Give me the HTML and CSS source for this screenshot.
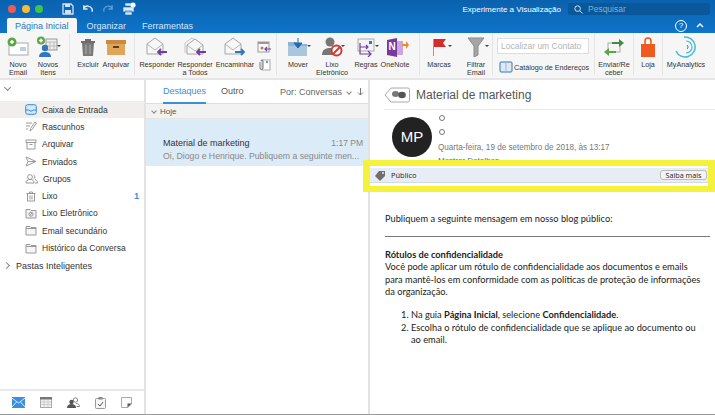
FILE: index.html
```html
<!DOCTYPE html>
<html>
<head>
  <title>Material de marketing</title>
  <link rel="stylesheet" href="styles.css">
</head>
<body>
  <header class="titlebar">
    <div class="topline">
      <div class="lights">
        <span class="light red"></span>
        <span class="light yellow"></span>
        <span class="light green"></span>
      </div>
      <div class="quick">
        <svg width="12" height="12" viewBox="0 0 12 12"><path d="M1 1h8l2 2v8H1z" fill="none" stroke="#cfe3f5" stroke-width="1.3"/><path d="M3 1h5v3H3zM3 7h6v4H3z" fill="#cfe3f5"/></svg>
        <svg width="12" height="12" viewBox="0 0 13 12"><path d="M2 5c2-3 7-3 9 1v3M2 2v4h4" fill="none" stroke="#dcebf8" stroke-width="1.6"/></svg>
        <svg width="12" height="12" viewBox="0 0 13 12"><path d="M11 5C9 2 4 2 2 6v3M11 2v4H7" fill="none" stroke="#5f9fd6" stroke-width="1.4"/></svg>
        <svg width="14" height="14" viewBox="0 0 14 14"><path d="M3 1h6v3H3zM1 5h11v5H1zM3 9h7v4H3z" fill="#dcebf8" stroke="#0b67b6" stroke-width=".6"/><circle cx="11" cy="3" r="2.6" fill="#fff"/></svg>
      </div>
      <div class="preview">Experimente a Visualização</div>
      <div class="search">
        <svg width="9" height="9" viewBox="0 0 9 9"><circle cx="3.6" cy="3.6" r="2.8" fill="none" stroke="#cfe3f5"/><path d="M5.8 5.8L8.5 8.5" stroke="#cfe3f5"/></svg>
        <span>Pesquisar</span>
      </div>
    </div>
    <div class="tabline">
      <div class="tab active">Página Inicial</div>
      <div class="tab">Organizar</div>
      <div class="tab">Ferramentas</div>
      <div class="tab-right">
        <span class="help">?</span>
        <svg width="8" height="5" viewBox="0 0 8 5"><path d="M1 4l3-3 3 3" fill="none" stroke="#fff" stroke-width="1.4"/></svg>
      </div>
    </div>
  </header>

  <div class="ribbon">
    <div class="group g-new">
      <div class="item w30">
        <div class="icon"><svg width="22" height="20" viewBox="0 0 22 20"><rect x="2" y="6" width="19" height="12" fill="#fff" stroke="#a9a9a9"/><path d="M13 10h6v4h-6z" fill="#b9cfe4"/><circle cx="5" cy="5" r="4.5" fill="#5aa646"/><path d="M3 5h4M5 3v4" stroke="#fff" stroke-width="1.4"/></svg></div>
        <div class="name">Novo<br>Email</div>
      </div>
      <div class="item w30">
        <div class="icon"><svg width="24" height="22" viewBox="0 0 24 22"><circle cx="5" cy="4.5" r="4" fill="#5aa646"/><path d="M3 4.5h4M5 2.5v4" stroke="#fff" stroke-width="1.3"/><rect x="10" y="3" width="11" height="11" fill="#eee" stroke="#999"/><path d="M10 6h11M14 6v8M18 6v8M10 10h11" stroke="#aaa" stroke-width=".7"/><circle cx="9" cy="12" r="3.2" fill="#2f77c0"/><path d="M3 21c0-4 3-5 6-5s6 1 6 5z" fill="#2f77c0"/></svg><i class="caret"></i></div>
        <div class="name">Novos<br>Itens</div>
      </div>
    </div>
    <div class="group g-delete">
      <div class="item w28">
        <div class="icon"><svg width="16" height="19" viewBox="0 0 16 19"><path d="M1 3h14v2H1zM5 1h6v2H5z" fill="#6d6d6d"/><path d="M2 5h12l-1 13H3z" fill="#7a7a7a"/><path d="M6 7v9M10 7v9" stroke="#a9a9a9" stroke-width="1.2"/></svg></div>
        <div class="name">Excluir</div>
      </div>
      <div class="item w28">
        <div class="icon"><svg width="20" height="17" viewBox="0 0 20 17"><path d="M0 1h20v4H0z" fill="#c9893f"/><path d="M1 5h18v11H1z" fill="#dfa658"/><path d="M7 7h6v2H7z" fill="#5a3d1c"/></svg></div>
        <div class="name">Arquivar</div>
      </div>
    </div>
    <div class="group g-reply">
      <div class="item w40">
        <div class="icon"><svg width="22" height="20" viewBox="0 0 22 20"><path d="M1 7l8-6 8 6v10H1z" fill="#f7f7f7" stroke="#a5a5a5"/><path d="M1 7l8 6 8-6" fill="none" stroke="#b5b5b5"/><path d="M21 15h-9M15 12l-3 3 3 3" fill="none" stroke="#6d3fa0" stroke-width="1.8"/></svg></div>
        <div class="name">Responder</div>
      </div>
      <div class="item w36">
        <div class="icon"><svg width="23" height="20" viewBox="0 0 23 20"><path d="M1 6l7-5 6 4" fill="none" stroke="#c5c5c5"/><path d="M1 6v10" stroke="#c5c5c5"/><path d="M3 8l8-6 8 6v9H3z" fill="#f7f7f7" stroke="#a5a5a5"/><path d="M3 8l8 6 8-6" fill="none" stroke="#b5b5b5"/><path d="M22 15h-9M16 12l-3 3 3 3" fill="none" stroke="#6d3fa0" stroke-width="1.8"/></svg></div>
        <div class="name">Responder<br>a Todos</div>
      </div>
      <div class="item w44">
        <div class="icon"><svg width="22" height="20" viewBox="0 0 22 20"><path d="M1 7l8-6 8 6v10H1z" fill="#f7f7f7" stroke="#a5a5a5"/><path d="M1 7l8 6 8-6" fill="none" stroke="#b5b5b5"/><path d="M11 15h9M17 12l3 3-3 3" fill="none" stroke="#2f77c0" stroke-width="1.8"/></svg></div>
        <div class="name">Encaminhar</div>
      </div>
      <div class="item w14 smalls">
        <svg width="14" height="12" viewBox="0 0 14 12"><rect x="1" y="1" width="11" height="10" fill="#fafafa" stroke="#999"/><path d="M1 1h11v2H1z" fill="#999"/><path d="M14 8H8M10 6L8 8l2 2" fill="none" stroke="#6d3fa0" stroke-width="1.2"/><circle cx="5" cy="7" r="1.5" fill="#d66"/></svg>
        <svg width="14" height="12" viewBox="0 0 14 12"><rect x="5" y="1" width="8" height="10" fill="#fff" stroke="#aaa"/><path d="M3 3v6a1.5 1.5 0 0 0 3 0V2a1 1 0 0 0-2 0" fill="none" stroke="#777"/><circle cx="10" cy="3" r="1" fill="#2f77c0"/></svg>
      </div>
    </div>
    <div class="group g-move">
      <div class="item w36">
        <div class="icon"><svg width="22" height="19" viewBox="0 0 22 19"><path d="M1 4h8l2 2h9v12H1z" fill="#8fb3d1"/><path d="M1 8h19v10H1z" fill="#a8c6de"/><path d="M11 0v7M7 5l4 5 4-5z" fill="#2468ad" stroke="#2468ad"/></svg><i class="caret"></i></div>
        <div class="name">Mover</div>
      </div>
      <div class="item w32">
        <div class="icon"><svg width="21" height="20" viewBox="0 0 21 20"><circle cx="8" cy="5" r="4.5" fill="#777"/><path d="M0 18c0-5 3-7 8-7s8 2 8 7z" fill="#777"/><circle cx="14.5" cy="13.5" r="5" fill="#fff" stroke="#d13b30" stroke-width="2"/><path d="M11 17l7-7" stroke="#d13b30" stroke-width="2"/></svg><i class="caret"></i></div>
        <div class="name">Lixo<br>Eletrônico</div>
      </div>
      <div class="item w28 rules">
        <div class="icon"><svg width="19" height="19" viewBox="0 0 19 19"><rect x="1" y="1" width="16" height="12" fill="#f4f4f4" stroke="#aaa"/><rect x="12" y="3" width="3" height="3" fill="#2f77c0"/><path d="M3 5v11h11M11 13l3 3-3 3M3 9h8M9 7l2 2-2 2" fill="none" stroke="#6d3fa0" stroke-width="1.2"/></svg><i class="caret"></i></div>
        <div class="name">Regras</div>
      </div>
      <div class="item w30">
        <div class="icon note-icon"><svg width="22" height="19" viewBox="0 0 22 19"><path d="M7 3h9v14H7z" fill="#c9a6dc"/><path d="M0 2l10-2v19L0 17z" fill="#7a3a9c"/><path d="M15 6h4V3l3 4-3 4V8h-4z" fill="#ee8a2c"/></svg><span class="onenote">N</span></div>
        <div class="name">OneNote</div>
      </div>
    </div>
    <div class="group g-flags">
      <div class="item w38">
        <div class="icon"><svg width="14" height="19" viewBox="0 0 14 19"><path d="M1 1h13l-3 4 3 4H1z" fill="#d62b2b"/><path d="M1.5 1v17" stroke="#999"/></svg><i class="caret"></i></div>
        <div class="name">Marcas</div>
      </div>
      <div class="item w36">
        <div class="icon"><svg width="18" height="20" viewBox="0 0 18 20"><path d="M1 1h16l-6 8v9l-4 2V9z" fill="#a5a5a5" stroke="#8a8a8a"/></svg><i class="caret"></i></div>
        <div class="name">Filtrar<br>Email</div>
      </div>
    </div>
    <div class="group g-contact">
      <div class="find">Localizar um Contato</div>
      <div class="book">
        <svg width="14" height="12" viewBox="0 0 14 12"><rect x="1" y="1" width="12" height="10" rx="1" fill="#dfe9f3" stroke="#2f77c0"/><path d="M7 1v10" stroke="#9fb9d2"/></svg>
        <span>Catálogo de Endereços</span>
      </div>
    </div>
    <div class="group g-send">
      <div class="item w38">
        <div class="icon"><svg width="20" height="19" viewBox="0 0 20 19"><rect x="4" y="5" width="12" height="9" fill="#f5f5f5" stroke="#aaa"/><path d="M8 4h7V1l5 4-5 4V6H8z" fill="#3f8f3f"/><path d="M12 15H5v3l-5-4 5-4v3h7z" fill="#5aa646"/></svg></div>
        <div class="name">Enviar/Re<br>ceber</div>
      </div>
    </div>
    <div class="group g-store">
      <div class="item w28">
        <div class="icon"><svg width="16" height="21" viewBox="0 0 16 21"><path d="M5 8V4a3 3 0 0 1 6 0v4" fill="none" stroke="#e8541c" stroke-width="1.5"/><path d="M1 7h14v13H1z" fill="#ee5a1f"/></svg></div>
        <div class="name">Loja</div>
      </div>
    </div>
    <div class="group g-last">
      <div class="item w46">
        <div class="icon"><svg width="22" height="22" viewBox="0 0 22 22"><g fill="none" stroke="#45bcd8"><path d="M9 1a10 10 0 1 1-8 14" stroke-width="1.5"/><path d="M11 5a6 6 0 0 1 0 12" stroke-width="1.2"/><path d="M12 9a2.5 2.5 0 0 1 0 4" stroke="#2a7f9a"/></g></svg></div>
        <div class="name">MyAnalytics</div>
      </div>
    </div>
  </div>

  <main class="panes">
    <nav class="sidebar">
      <div class="folders">
        <div class="chev-row"><i class="chev down"></i></div>
        <div class="folder selected">
          <svg width="12" height="11" viewBox="0 0 12 11"><rect x=".7" y=".7" width="10.6" height="9.6" rx="2" fill="#d8e8f7" stroke="#2f8ae0"/><path d="M1 6h3c.5 1.5 3.5 1.5 4 0h3" fill="none" stroke="#2f8ae0"/></svg>
          <span>Caixa de Entrada</span>
        </div>
        <div class="folder">
          <svg width="12" height="11" viewBox="0 0 12 11"><path d="M1 2h6M1 5h4M1 8h2M5 10l.5-2.5L10 1l1.5 1L7 8.500z" fill="none" stroke="#999"/></svg>
          <span>Rascunhos</span>
        </div>
        <div class="folder">
          <svg width="12" height="11" viewBox="0 0 12 11"><path d="M1 1h10v2.5H1zM2 3.5h8V10H2zM4.5 5.5h3" fill="none" stroke="#999"/></svg>
          <span>Arquivar</span>
        </div>
        <div class="folder">
          <svg width="12" height="11" viewBox="0 0 12 11"><path d="M1 1l10 4.5L1 10l2-4.5zM3 5.5h8" fill="none" stroke="#999"/></svg>
          <span>Enviados</span>
        </div>
        <div class="folder">
          <svg width="13" height="11" viewBox="0 0 13 11"><circle cx="5" cy="4" r="2.4" fill="none" stroke="#999"/><path d="M1 10c0-2.5 1.5-3.5 4-3.5S9 7.5 9 10zM8.5 1.8a2.3 2.3 0 0 1 0 4.200M10 6.500c1.500.5 2.500 1.500 2.500 3.500H10" fill="none" stroke="#999"/></svg>
          <span>Grupos</span>
        </div>
        <div class="folder">
          <svg width="12" height="11" viewBox="0 0 12 11"><path d="M1.5 2.5h9M4.5 2.5V1h3v1.500M2.500 2.500V10h7V2.500M5 4.500v4M7 4.500v4" fill="none" stroke="#999"/></svg>
          <span>Lixo</span>
          <b class="count">1</b>
        </div>
        <div class="folder">
          <svg width="12" height="11" viewBox="0 0 12 11"><path d="M1 1.5h4l1 1h5V10H1z" fill="#f1f1f1" stroke="#999"/><circle cx="6" cy="6.2" r="2" fill="none" stroke="#999"/><path d="M4.6 7.6l2.8-2.8" stroke="#999"/></svg>
          <span>Lixo Eletrônico</span>
        </div>
        <div class="folder">
          <svg width="12" height="11" viewBox="0 0 12 11"><path d="M1 1.5h4l1 1h5V10H1zM1 3.5h10" fill="#f6f6f6" stroke="#999"/></svg>
          <span>Email secundário</span>
        </div>
        <div class="folder">
          <svg width="12" height="11" viewBox="0 0 12 11"><path d="M1 1.5h4l1 1h5V10H1zM1 3.5h10" fill="#f6f6f6" stroke="#999"/></svg>
          <span>Histórico da Conversa</span>
        </div>
        <div class="smart"><i class="chev right"></i><span>Pastas Inteligentes</span></div>
      </div>
      <div class="modes">
        <svg width="13" height="11" viewBox="0 0 13 11"><rect width="13" height="11" fill="#3a8fe0"/><path d="M0 1l6.5 5L13 1M0 10l4.5-5M13 10L8.5 5" fill="none" stroke="#fff" stroke-width=".8"/></svg>
        <svg width="12" height="11" viewBox="0 0 12 11"><rect x=".5" y=".5" width="11" height="10" fill="#f2f2f2" stroke="#aaa"/><path d="M0 0h12v2.5H0z" fill="#777"/><path d="M1 5h10M1 7.5h10M4 3v7M8 3v7" stroke="#bbb" stroke-width=".6"/></svg>
        <svg width="13" height="11" viewBox="0 0 13 11"><circle cx="8.5" cy="3" r="2.2" fill="#fff" stroke="#888"/><path d="M9 6.500c2 0 3.500 1 3.500 3H9.500" fill="none" stroke="#888"/><circle cx="4.5" cy="5" r="2.2" fill="#555"/><path d="M0 11c0-3 2-4 4.500-4s4.500 1 4.500 4z" fill="#555"/></svg>
        <svg width="11" height="12" viewBox="0 0 11 12"><rect x=".5" y="1.5" width="10" height="10" rx="1" fill="#f5f5f5" stroke="#999"/><path d="M3.5 0h4v2.5h-4z" fill="#888"/><path d="M3 7l2 2 3-4" fill="none" stroke="#555"/></svg>
        <svg width="11" height="11" viewBox="0 0 11 11"><path d="M.5.5h10V7l-3.500 3.500H.5z" fill="#fbfbfb" stroke="#aaa"/><path d="M6.500 10.500V6.500h4z" fill="#555"/></svg>
      </div>
    </nav>

    <section class="list">
      <div class="list-tabs">
        <span class="list-tab current">Destaques</span>
        <span class="list-tab">Outro</span>
        <span class="sort">Por: Conversas</span>
        <i class="chev down small"></i>
        <svg class="sort-arrow" width="7" height="8" viewBox="0 0 7 8"><path d="M3.5 0v7M1 4.500L3.500 7 6 4.500" fill="none" stroke="#777"/></svg>
      </div>
      <div class="day"><i class="chev down small"></i><span>Hoje</span></div>
      <div class="message">
        <div class="msg-top"><span>Material de marketing</span><span class="time">1:17 PM</span></div>
        <div class="msg-preview">Oi, Diogo e Henrique. Publiquem a seguinte men...</div>
      </div>
    </section>

    <section class="reader">
      <div class="subject">
        <svg width="26" height="16" viewBox="0 0 26 16"><path d="M7 1h17a1.500 1.500 0 0 1 1.500 1.500v11A1.500 1.500 0 0 1 24 15H7L1 8z" fill="#fff" stroke="#aaa"/><ellipse cx="11.500" cy="7" rx="3.500" ry="3" fill="#777"/><ellipse cx="18" cy="8" rx="3.800" ry="3.300" fill="#555"/></svg>
        <h1>Material de marketing</h1>
      </div>
      <div class="sender">
        <div class="avatar">MP</div>
        <div class="sender-info">
          <i class="dot"></i>
          <i class="dot"></i>
          <div class="date">Quarta-feira, 19 de setembro de 2018, às 13:17</div>
          <div class="details">Mostrar Detalhes</div>
        </div>
      </div>
      <div class="label-frame">
        <div class="label-bar">
          <svg width="12" height="11" viewBox="0 0 12 11"><path d="M5 1h6v5l-5 5-5-5z" fill="#6f6f6f"/><circle cx="9" cy="3" r="1" fill="#e8ecf4"/></svg>
          <span>Público</span>
          <span class="learn">Saiba mais</span>
        </div>
      </div>
      <article class="mail">
        <p>Publiquem a seguinte mensagem em nosso blog público:</p>
        <hr>
        <p><b>Rótulos de confidencialidade</b><br>Você pode aplicar um rótulo de confidencialidade aos documentos e emails para mantê-los em conformidade com as políticas de proteção de informações da organização.</p>
        <ol>
          <li>Na guia <b>Página Inicial</b>, selecione <b>Confidencialidade</b>.</li>
          <li>Escolha o rótulo de confidencialidade que se aplique ao documento ou ao email.</li>
        </ol>
      </article>
    </section>
  </main>
</body>
</html>
```

FILE: styles.css
```css
* {
  box-sizing: border-box;
}

body {
  margin: 0;
  width: 715px;
  height: 415px;
  overflow: hidden;
  display: flex;
  flex-direction: column;
  font-family: "Liberation Sans", Arial, sans-serif;
  color: #333;
  background: #fff;
}

/* title bar */
.titlebar {
  height: 33px;
  flex: none;
  background: linear-gradient(#0a62ae, #0e74ca);
}

.topline {
  height: 18px;
  display: flex;
  align-items: center;
  padding-left: 8px;
}

.lights {
  display: flex;
  gap: 5.5px;
  width: 54px;
}

.light {
  width: 8px;
  height: 8px;
  border-radius: 50%;
}

.red { background: #ee5a58; }
.yellow { background: #f6bd33; }
.green { background: #3ec549; }

.quick {
  display: flex;
  align-items: center;
  gap: 8px;
}

.preview {
  margin-left: auto;
  font-size: 8px;
  color: #fff;
}

.search {
  width: 142px;
  height: 12px;
  margin: 0 5px 0 7px;
  padding-left: 6px;
  display: flex;
  align-items: center;
  gap: 5px;
  background: #0a5799;
  border-radius: 3px;
  font-size: 8.5px;
  color: #7fb0da;
}

.tabline {
  height: 15px;
  display: flex;
  padding-left: 7px;
  font-size: 9px;
  color: #d5e7f7;
}

.tab {
  padding: 3px 8px 0;
}

.tab.active {
  margin-right: 2px;
  background: #f6f6f6;
  color: #2a78bd;
  border-radius: 2px 2px 0 0;
}

.tab-right {
  margin-left: auto;
  display: flex;
  align-items: center;
  gap: 9px;
  padding-right: 11px;
}

.help {
  width: 12px;
  height: 12px;
  border: 1px solid #fff;
  border-radius: 50%;
  color: #fff;
  font-size: 8px;
  line-height: 10px;
  text-align: center;
}

/* ribbon */
.ribbon {
  height: 47px;
  flex: none;
  display: flex;
  background: #f6f6f6;
  border-bottom: 2px solid #e6e6e6;
}

.group {
  flex: none;
  display: flex;
  margin-bottom: 3px;
  border-right: 1px solid #e4e4e4;
}

.g-new { width: 70px; padding-left: 3px; }
.g-delete { width: 65px; padding-left: 4px; }
.g-reply { width: 142px; padding-left: 2px; }
.g-move { width: 143px; padding-left: 3px; }
.g-flags { width: 73px; }
.g-contact { width: 102px; }
.g-send { width: 39px; }
.g-store { width: 29px; }
.g-last { width: 52px; border-right: 0; }

.item {
  flex: none;
  position: relative;
  text-align: center;
  font-size: 7.2px;
  line-height: 8px;
  color: #333;
}

.w14 { width: 14px; }
.w28 { width: 28px; }
.w30 { width: 30px; }
.w32 { width: 32px; }
.w36 { width: 36px; }
.w38 { width: 38px; }
.w40 { width: 40px; }
.w44 { width: 44px; }
.w46 { width: 46px; }

.rules {
  margin-left: 4px;
}

.icon {
  height: 28px;
  display: flex;
  justify-content: center;
  align-items: center;
  position: relative;
}

.note-icon {
  padding-left: 6px;
}

.name {
  white-space: nowrap;
}

.caret {
  position: absolute;
  left: calc(50% + 9px);
  top: 12px;
  border: 2px solid transparent;
  border-top: 2.5px solid #444;
}

.onenote {
  position: absolute;
  left: 7px;
  top: 8px;
  width: 10px;
  font-size: 10px;
  line-height: 12px;
  font-weight: bold;
  color: #fff;
}

.smalls {
  display: flex;
  flex-direction: column;
  align-items: center;
  gap: 6px;
  padding-top: 8px;
}

.g-contact {
  flex-direction: column;
  padding: 5px 0 0 4px;
}

.find {
  width: 92px;
  height: 16px;
  border: 1px solid #ddd;
  background: #fff;
  font-size: 8.5px;
  line-height: 14px;
  padding-left: 3px;
  color: #b4b4b4;
  white-space: nowrap;
}

.book {
  display: flex;
  align-items: center;
  gap: 1px;
  margin-top: 7px;
  padding-left: 2px;
  font-size: 7.2px;
  white-space: nowrap;
}

/* panes */
.panes {
  flex: 1;
  min-height: 0;
  display: flex;
  border-bottom: 1px solid #9a9a9a;
}

.sidebar {
  width: 146px;
  flex: none;
  display: flex;
  flex-direction: column;
  border-right: 2px solid #e3e3e3;
}

.folders {
  flex: 1;
}

.chev-row {
  height: 21px;
  display: flex;
  padding: 5px 0 0 5px;
}

.chev {
  flex: none;
  display: block;
  width: 5px;
  height: 5px;
  border-right: 1px solid #888;
  border-bottom: 1px solid #888;
}

.chev.down {
  transform: rotate(45deg);
}

.chev.right {
  transform: rotate(-45deg);
}

.chev.small {
  width: 4px;
  height: 4px;
}

.folder {
  height: 17.3px;
  display: flex;
  align-items: center;
  padding: 0 5px 0 25px;
  font-size: 8.5px;
  color: #333;
}

.folder svg {
  flex: none;
  margin-right: 5px;
}

.folder.selected {
  background: #f1efed;
}

.count {
  margin-left: auto;
  color: #2f8ae0;
  font-size: 8.5px;
}

.smart {
  height: 18px;
  display: flex;
  align-items: center;
  gap: 7px;
  padding-left: 4px;
  font-size: 9px;
  color: #333;
}

.modes {
  height: 25px;
  flex: none;
  display: flex;
  align-items: center;
  gap: 15px;
  padding-left: 12px;
  border-top: 2px solid #e8e8e8;
}

/* message list */
.list {
  width: 224px;
  flex: none;
  border-right: 2px solid #e3e3e3;
}

.list-tabs {
  height: 24px;
  display: flex;
  align-items: center;
  padding: 0 4px 0 17px;
  font-size: 9px;
  color: #555;
  border-bottom: 1px solid #ddd;
}

.list-tab {
  height: 24px;
  line-height: 23px;
  margin-right: 15px;
}

.list-tab.current {
  color: #3a8fd6;
  border-bottom: 2px solid #3a8fd6;
}

.sort {
  margin-left: auto;
  margin-right: 5px;
  color: #666;
}

.sort-arrow {
  margin-left: 6px;
}

.day {
  height: 15px;
  display: flex;
  align-items: center;
  gap: 4px;
  padding-left: 6px;
  background: #f2f2f2;
  border-bottom: 1px solid #e6e6e6;
  font-size: 8px;
  color: #555;
}

.message {
  height: 47px;
  padding: 18px 5px 0 17px;
  background: #dcebf8;
  font-size: 9px;
}

.msg-top {
  display: flex;
  justify-content: space-between;
  line-height: 12px;
}

.time {
  font-size: 8.5px;
  color: #888;
}

.msg-preview {
  font-size: 8.7px;
  line-height: 14px;
  color: #888;
  white-space: nowrap;
}

/* reading pane */
.reader {
  flex: 1;
  min-width: 0;
}

.subject {
  height: 30px;
  margin-left: 14px;
  display: flex;
  align-items: center;
  gap: 6px;
  border-bottom: 1px solid #e8e8e8;
}

.subject h1 {
  margin: 0;
  font-size: 12px;
  font-weight: normal;
  color: #555;
}

.sender {
  height: 50px;
  overflow: hidden;
  display: flex;
  padding: 7px 0 0 22px;
}

.avatar {
  width: 40px;
  height: 40px;
  flex: none;
  border-radius: 50%;
  background: #222;
  color: #fff;
  font-size: 15px;
  line-height: 40px;
  text-align: center;
}

.sender-info {
  padding-left: 6px;
}

.dot {
  display: block;
  width: 6px;
  height: 6px;
  margin: 0 0 8px 1px;
  border: 1.5px solid #777;
  border-radius: 50%;
}

.dot:first-child {
  margin-top: -2px;
}

.date {
  margin-top: 0;
  font-size: 8.15px;
  line-height: 10px;
  color: #777;
  white-space: nowrap;
}

.details {
  margin-top: 2.5px;
  font-size: 8px;
  line-height: 10px;
  color: #2f77c0;
}

/* yellow callout round the label, laps over the list pane */
.label-frame {
  position: relative;
  margin-left: -7px;
  height: 32px;
  padding: 2px 0 3px;
  background: #fff;
  border: 6px solid #f5f23e;
  border-left-width: 7px;
  border-right-width: 7px;
}

.label-bar {
  height: 15px;
  display: flex;
  align-items: center;
  gap: 5px;
  padding: 0 1px 0 4px;
  background: #e8ecf4;
  border-bottom: 1px solid #d5d9e0;
  font-family: "Open Sans", sans-serif;
  font-size: 7.5px;
  color: #222;
}

.learn {
  margin-left: auto;
  width: 47px;
  height: 10px;
  border: 1px solid #bbb;
  border-radius: 3px;
  background: #f4f4f4;
  font-size: 7.2px;
  line-height: 8px;
  text-align: center;
}

.mail {
  padding: 21px 10px 0 15px;
  font-family: Lato, sans-serif;
  font-size: 9.25px;
  line-height: 12.6px;
  color: #222;
}

.mail p {
  margin: 0;
}

.mail hr {
  height: 1px;
  margin: 10px -5px 12px 0;
  border: 0;
  border-top: 1px solid #777;
}

.mail ol {
  margin: 10px 0 0;
  padding-left: 26px;
}
```
